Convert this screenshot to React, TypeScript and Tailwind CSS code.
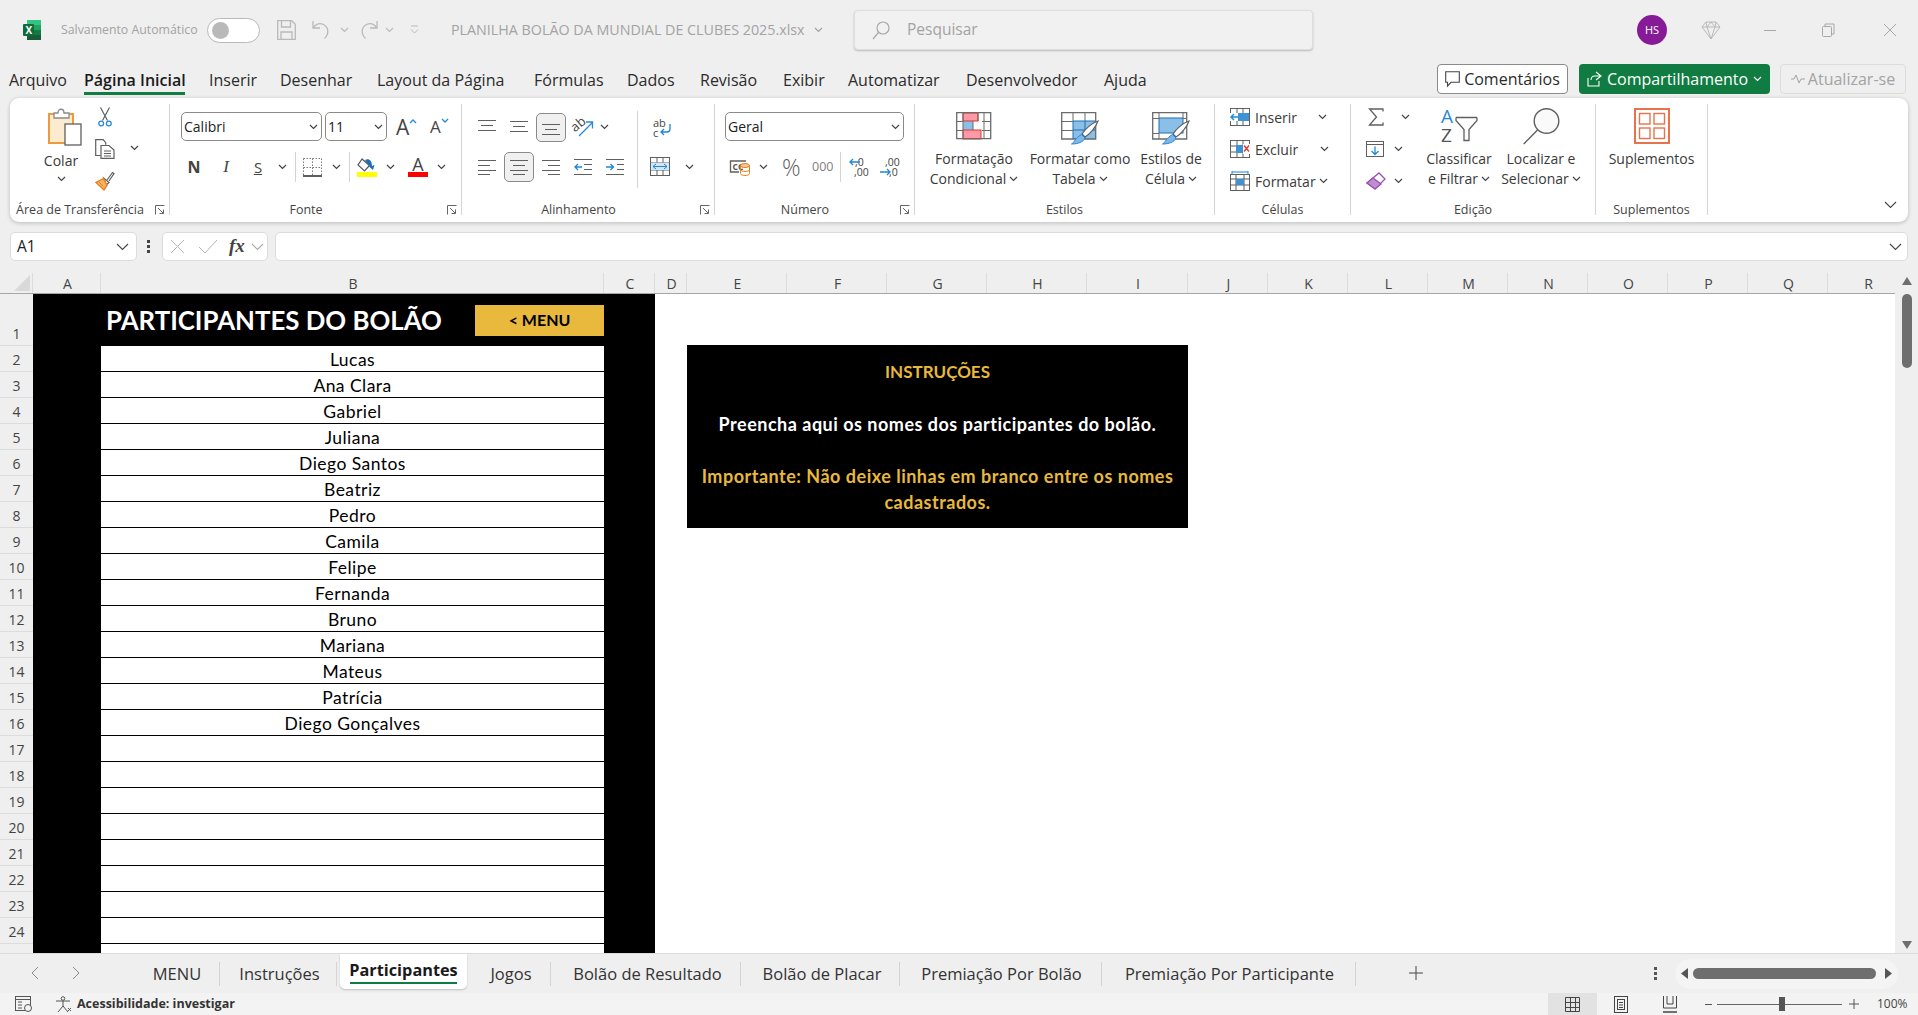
import React from "react";

const Ico = ({ w, h, children, className = "" }: { w: number; h: number; children?: React.ReactNode; className?: string }) => (
  <svg width={w} height={h} viewBox={`0 0 ${w} ${h}`} fill="none" className={`shrink-0 overflow-visible ${className}`}>
    {children}
  </svg>
);

const Chev = ({ color = "#444" }: { color?: string }) => (
  <Ico w={9} h={6}>
    <path d="M1 1l3.5 3.5L8 1" stroke={color} strokeWidth="1.2" />
  </Ico>
);

const WideChev = ({ color = "#444" }: { color?: string }) => (
  <Ico w={13} h={8}>
    <path d="M1 1l5.5 5.5L12 1" stroke={color} strokeWidth="1.1" />
  </Ico>
);

const Bars = ({ rows, w = 18, h = 14, color = "#5f5f5f" }: { rows: number[][]; w?: number; h?: number; color?: string }) => (
  <Ico w={w} h={h}>
    {rows.map((r, i) => (
      <path key={i} d={`M${r[0]} ${r[2]}.5H${r[1]}`} stroke={color} />
    ))}
  </Ico>
);

const Launcher = () => (
  <Ico w={10} h={10}>
    <path d="M.5 9.5V.5h9" stroke="#666" />
    <path d="M3 3l5.5 5.5M8.5 4.5v4h-4" stroke="#666" />
  </Ico>
);

const Sep = ({ className }: { className: string }) => <div className={`w-px shrink-0 bg-[#d4d4d4] ${className}`} />;

const Group = ({
  className,
  label,
  launcher,
  children,
}: {
  className: string;
  label: string;
  launcher?: boolean;
  children: React.ReactNode;
}) => (
  <div className={`flex h-[111px] shrink-0 flex-col border-r border-[#d4d4d4] ${className}`}>
    <div className="h-[101px]">{children}</div>
    <div className="flex h-[10px] items-center text-[12.5px] leading-[10px] text-[#444]">
      <div className="flex-1 whitespace-nowrap text-center">{label}</div>
      {launcher && (
        <div className="mr-[4px] ml-[5px] w-[10px]">
          <Launcher />
        </div>
      )}
    </div>
  </div>
);

const Select = ({ className, value }: { className: string; value: string }) => (
  <div className={`flex h-[29px] items-center justify-between rounded-[5px] border border-[#8a8a8a] pr-[3px] pl-[2px] text-[14px] text-[#222] ${className}`}>
    <span>{value}</span>
    <Chev />
  </div>
);

const Cell = ({ className = "w-[32px]", children }: { className?: string; children?: React.ReactNode }) => (
  <div className={`flex h-[30px] shrink-0 items-center justify-center ${className}`}>{children}</div>
);

const ChevCell = ({ className = "" }: { className?: string }) => (
  <div className={`flex w-[20px] shrink-0 justify-center ${className}`}>
    <Chev />
  </div>
);

const BigText = ({ top, bottom }: { top: string; bottom?: string }) => (
  <div className="text-center text-[14px] leading-[20px] whitespace-nowrap text-[#3a3a3a]">
    <div>{top}</div>
    {bottom && (
      <div className="flex items-center justify-center gap-[3px]">
        {bottom}
        <Chev />
      </div>
    )}
  </div>
);

/* ---- ribbon icons ---- */
const PasteIcon = () => (
  <Ico w={34} h={38}>
    <rect x="1" y="6" width="24" height="29" fill="#fdebd0" stroke="#ec9a3a" strokeWidth="2" />
    <path d="M6 10V5h4c0-5 6-5 6 0h5v5z" fill="#fff" stroke="#8a8a8a" strokeWidth="1.3" />
    <rect x="17" y="16" width="16" height="21" fill="#fff" stroke="#5f5f5f" strokeWidth="1.3" />
  </Ico>
);
const ScissorsIcon = () => (
  <Ico w={14} h={20}>
    <path d="M4.5 13.5L11.5.5M9.5 13.5L2.5.5" stroke="#5f5f5f" strokeWidth="1.2" />
    <circle cx="3.2" cy="16.5" r="2.4" stroke="#2b88d8" strokeWidth="1.3" />
    <circle cx="10.8" cy="16.5" r="2.4" stroke="#2b88d8" strokeWidth="1.3" />
  </Ico>
);
const CopyIcon = () => (
  <Ico w={20} h={20}>
    <path d="M5.5 16.5H.7V.7h7.5l2.5 3v2" stroke="#5f5f5f" strokeWidth="1.2" />
    <path d="M6 6.5h8l5 4.5v8.3H6z" fill="#fff" stroke="#5f5f5f" strokeWidth="1.2" />
    <path d="M9 12h7M9 14.5h7M9 17h7" stroke="#5f5f5f" />
  </Ico>
);
const BrushIcon = () => (
  <Ico w={20} h={20}>
    <path d="M12 9l5.5-7.5 1.5 1.2L14 10" stroke="#5f5f5f" strokeWidth="1.2" fill="#fff" />
    <path d="M8.5 7L14 11.5 10 15z" fill="#fff" stroke="#5f5f5f" strokeWidth="1.2" />
    <path d="M8.5 7.5L1 11.5 9 19l3-4.5z" fill="#f5b366" stroke="#e8801c" strokeWidth="1.4" />
    <path d="M4 11l4 4" stroke="#e8801c" />
  </Ico>
);
const GrowIcon = ({ down }: { down?: boolean }) => (
  <div className="flex items-start">
    <span className={`${down ? "text-[17px]" : "text-[21px]"} leading-[20px] text-[#444]`}>A</span>
    <Ico w={8} h={6} className="mt-[1px]">
      <path d={down ? "M1 1l3 3 3-3" : "M1 5l3-3 3 3"} stroke="#2b88d8" strokeWidth="1.3" />
    </Ico>
  </div>
);
const BorderIcon = () => (
  <Ico w={19} h={19}>
    <path d="M.5.5h18M.5 9.5h18M.5.5v18M9.5.5v18M18.5.5v18" stroke="#7a7a7a" strokeDasharray="1.5 1.5" />
    <path d="M0 18h19" stroke="#5f5f5f" strokeWidth="2" />
  </Ico>
);
const FillIcon = () => (
  <Ico w={20} h={20}>
    <path d="M5 2L1 8l6.5 6 5-5.5z" fill="#fff" stroke="#555" strokeWidth="1.2" />
    <path d="M8 3c4-2 7 1 7 6l2.5-1-1.5 5-3-2.5z" fill="#1f6fb2" />
    <rect y="15" width="20" height="5" fill="#ffff00" />
  </Ico>
);
const ColorA = () => (
  <div className="flex w-[20px] flex-col items-center">
    <span className="text-[18px] leading-[15px] text-[#444]">A</span>
    <div className="h-[5px] w-[20px] bg-[#ff0000]" />
  </div>
);
const OrientIcon = () => (
  <Ico w={22} h={20}>
    <text x="0" y="13" fontSize="13" fill="#444" transform="rotate(-40 5 10)" fontFamily="Open Sans, sans-serif">ab</text>
    <path d="M7 19L20 6M14 5h6.5v6.5" stroke="#2b88d8" strokeWidth="1.3" />
  </Ico>
);
const OutdentIcon = ({ flip }: { flip?: boolean }) => (
  <Ico w={18} h={16}>
    <path d="M0 .5h18M0 15.5h18" stroke="#5f5f5f" />
    <path d={flip ? "M11 5.5h7M11 10.5h7" : "M10 5.5h8M10 10.5h8"} stroke="#5f5f5f" />
    <path d={flip ? "M0 8h7M4.5 5l3 3-3 3" : "M1 8h7M4 5L1 8l3 3"} stroke="#1e88d4" strokeWidth="1.3" />
  </Ico>
);
const WrapIcon = () => (
  <Ico w={19} h={20}>
    <text x="0" y="9" fontSize="11" fill="#444" fontFamily="Open Sans, sans-serif">ab</text>
    <text x="0" y="19" fontSize="11" fill="#444" fontFamily="Open Sans, sans-serif">c</text>
    <path d="M17 6v5c0 2-1.5 3-3 3H8M11 11l-3 3 3 3" stroke="#1e88d4" strokeWidth="1.3" />
  </Ico>
);
const MergeIcon = () => (
  <Ico w={20} h={19}>
    <rect x=".5" y=".5" width="19" height="18" stroke="#5f5f5f" />
    <path d="M0 6h20M0 13h20M7 .5v5M13 .5v5M7 13v5M13 13v5" stroke="#5f5f5f" />
    <rect x="1" y="6" width="18" height="7" fill="#cfe6f7" />
    <path d="M3 9.5h14M6 7l-3 2.5L6 12M14 7l3 2.5L14 12" stroke="#1e88d4" />
  </Ico>
);
const MoneyIcon = () => (
  <Ico w={20} h={17}>
    <path d="M16 2H.5v11H9" stroke="#5f5f5f" strokeWidth="1.3" />
    <text x="2.5" y="10.5" fontSize="8.5" fontWeight="700" fill="#555" fontFamily="Open Sans, sans-serif">CC</text>
    <ellipse cx="15" cy="6.5" rx="4.5" ry="2" fill="#f8c99a" stroke="#e8801c" />
    <path d="M10.5 6.5v8c0 2.6 9 2.6 9 0v-8M10.5 10.5c0 2.6 9 2.6 9 0" stroke="#e8801c" fill="none" />
  </Ico>
);
const DecIcon = ({ more }: { more?: boolean }) => (
  <Ico w={20} h={20}>
    <text x={more ? "5" : "6"} y="8.5" fontSize="10.5" fill="#444" fontFamily="Open Sans, sans-serif">{more ? ",00" : ",0"}</text>
    <text x={more ? "9" : "5"} y="18.5" fontSize="10.5" fill="#444" fontFamily="Open Sans, sans-serif">{more ? ",0" : ",00"}</text>
    {more ? (
      <path d="M0 15h10M7 12l3 3-3 3" stroke="#1e88d4" strokeWidth="1.3" />
    ) : (
      <path d="M1 5h10M4 2L1 5l3 3" stroke="#1e88d4" strokeWidth="1.3" />
    )}
  </Ico>
);
const CondIcon = () => (
  <Ico w={36} h={28}>
    <rect x="7" y="9" width="10" height="9" fill="#8abfe8" />
    <rect x="7" y="1" width="15" height="8" fill="#fb9aa6" stroke="#e4352c" />
    <rect x="7" y="18" width="18" height="9" fill="#fb9aa6" stroke="#e4352c" />
    <path d="M.7.7h34v26H.7z" stroke="#6b6b6b" strokeWidth="1.3" />
    <path d="M1 9.5h6M26 9.5h9M1 18.5h6M26 18.5h9M7 1v26M28 1v26M17 9v9M22 1v8" stroke="#6b6b6b" />
  </Ico>
);
const Handle = () => (
  <g>
    <path d="M37 9c-2 6-8 13-13 16l-3-3c3-5 10-11 16-13z" fill="#fff" stroke="#5f5f5f" strokeWidth="1.2" />
    <path d="M20.5 22.5l3.5 3.5c-1.5 4-7 6-13.5 6 3-1.5 3.5-6 10-9.5z" fill="#7db8e8" stroke="#2b88d8" />
  </g>
);
const TableIcon = () => (
  <Ico w={38} h={33}>
    <rect x="12" y="9" width="23" height="18" fill="#8abfe8" />
    <path d="M12 9h23M12 18h23M12 9v18M24 9v18" stroke="#1f6fb2" />
    <path d="M.7 27V.7h34V27z" stroke="#6b6b6b" strokeWidth="1.3" />
    <path d="M1 9.5h11M1 18.5h11M12 1v8M24 1v8" stroke="#6b6b6b" />
    <Handle />
  </Ico>
);
const CellStyleIcon = () => (
  <Ico w={38} h={33}>
    <rect x="7" y="6" width="24" height="15" fill="#8abfe8" stroke="#1f6fb2" />
    <path d="M.7 27V.7h34V27z" stroke="#6b6b6b" strokeWidth="1.3" />
    <path d="M1 6.5h6M31 6.5h4M1 21.5h6M7 1v5M31 1v5M7 21v6" stroke="#6b6b6b" />
    <Handle />
  </Ico>
);
const SmallGrid = ({ children }: { children?: React.ReactNode }) => (
  <Ico w={20} h={18}>
    <rect x=".5" y=".5" width="19" height="17" stroke="#5f5f5f" />
    <path d="M0 6h20M0 12h20M7 0v18M13 0v18" stroke="#5f5f5f" />
    {children}
  </Ico>
);
const InsertIcon = () => (
  <SmallGrid>
    <rect x="8" y="5" width="11" height="8" fill="#3f92d6" />
    <rect x="0" y="5" width="8" height="8" fill="#fff" />
    <path d="M1 9h7M4 6L1 9l3 3" stroke="#1e88d4" strokeWidth="1.4" />
  </SmallGrid>
);
const DeleteIcon = () => (
  <SmallGrid>
    <rect x="6" y="5" width="8" height="8" fill="#3f92d6" />
    <rect x="13" y="4" width="7" height="10" fill="#fff" />
    <path d="M14 5.5l5 6M19 5.5l-5 6" stroke="#e4352c" strokeWidth="1.4" />
  </SmallGrid>
);
const FormatIcon = () => (
  <Ico w={20} h={20}>
    <path d="M2 1h16M2 0v3M18 0v3" stroke="#1e88d4" />
    <rect x=".5" y="3.5" width="19" height="16" stroke="#5f5f5f" />
    <path d="M0 8h20M0 14h20M6 3v17M14 3v17" stroke="#5f5f5f" />
    <rect x="6" y="8" width="8" height="6" fill="#3f92d6" />
  </Ico>
);
const SigmaIcon = () => (
  <Ico w={16} h={18}>
    <path d="M15 3.5V1H1.5L8.5 9l-7 8H15v-2.5" stroke="#5f5f5f" strokeWidth="1.3" />
  </Ico>
);
const FillDownIcon = () => (
  <Ico w={18} h={16}>
    <rect x=".5" y=".5" width="17" height="15" stroke="#5f5f5f" />
    <path d="M0 3.5h18" stroke="#5f5f5f" />
    <path d="M9 5.5v7.5M5.5 10L9 13.5 12.5 10" stroke="#1e88d4" strokeWidth="1.3" />
  </Ico>
);
const EraserIcon = () => (
  <Ico w={20} h={18}>
    <path d="M13 1l6 6-10 10-8-6z" fill="#fff" stroke="#9b4fb0" strokeWidth="1.3" />
    <path d="M7 6l8 6-6 5-8-6z" fill="#c08ed0" stroke="#9b4fb0" strokeWidth="1.3" />
  </Ico>
);
const SortIcon = () => (
  <Ico w={37} h={36}>
    <text x="0" y="15" fontSize="19" fill="#2b88d8" fontFamily="Open Sans, sans-serif">A</text>
    <text x="0" y="34" fontSize="19" fill="#555" fontFamily="Open Sans, sans-serif">Z</text>
    <path d="M15 9.5h21M15 9.5v3l8 9v11h5v-11l8-9v-3" stroke="#5f5f5f" strokeWidth="1.3" fill="#fff" />
  </Ico>
);
const FindIcon = () => (
  <Ico w={37} h={37}>
    <circle cx="23.5" cy="13" r="12.3" stroke="#5f5f5f" strokeWidth="1.4" fill="#fafafa" />
    <path d="M14.5 22L.7 36" stroke="#5f5f5f" strokeWidth="1.4" />
  </Ico>
);
const AddinIcon = () => (
  <Ico w={36} h={36}>
    <rect x="1" y="1" width="34" height="34" stroke="#e8734a" strokeWidth="2" />
    <rect x="5.5" y="5.5" width="10.5" height="10.5" stroke="#e8734a" strokeWidth="1.4" />
    <rect x="20" y="5.5" width="10.5" height="10.5" stroke="#e8734a" strokeWidth="1.4" />
    <rect x="5.5" y="20" width="10.5" height="10.5" stroke="#e8734a" strokeWidth="1.4" />
    <rect x="20" y="20" width="10.5" height="10.5" stroke="#e8734a" strokeWidth="1.4" />
  </Ico>
);

const ribbonTabs = [
  { label: "Arquivo", cls: "ml-[9px] w-[75px]" },
  { label: "Inserir", cls: "w-[71px]" },
  { label: "Desenhar", cls: "w-[97px]" },
  { label: "Layout da Página", cls: "w-[157px]" },
  { label: "Fórmulas", cls: "w-[93px]" },
  { label: "Dados", cls: "w-[73px]" },
  { label: "Revisão", cls: "w-[83px]" },
  { label: "Exibir", cls: "w-[65px]" },
  { label: "Automatizar", cls: "w-[118px]" },
  { label: "Desenvolvedor", cls: "w-[138px]" },
  { label: "Ajuda", cls: "w-[60px]" },
];

const TitleBar = () => (
  <div className="flex h-[60px] items-center text-[#a3a3a3]">
    <Ico w={18} h={20} className="ml-[23px]">
      <rect x="4" width="14" height="5" fill="#33c481" />
      <rect x="4" y="5" width="14" height="5" fill="#21a366" />
      <rect x="4" y="10" width="14" height="5" fill="#107c41" />
      <rect x="4" y="15" width="14" height="5" fill="#185c37" />
      <rect y="4" width="11" height="12" rx="1" fill="#0f6b3a" />
      <text x="2.6" y="13.5" fontSize="10" fontWeight="700" fill="#fff" fontFamily="Open Sans, sans-serif">X</text>
    </Ico>
    <span className="ml-[20px] w-[146px] text-[12.3px] whitespace-nowrap">Salvamento Automático</span>
    <div className="flex h-[25px] w-[53px] items-center rounded-full border border-[#b9b9b9] bg-white pl-[4px]">
      <div className="h-[17px] w-[17px] rounded-full bg-[#b9b9b9]" />
    </div>
    <Ico w={19} h={20} className="ml-[17px]">
      <path d="M.7.7h14l3.6 3.6v15H.7z" stroke="#b9b9b9" strokeWidth="1.3" />
      <path d="M4.5 1v6h9V1M4 19v-7h11v7" stroke="#b9b9b9" strokeWidth="1.3" />
    </Ico>
    <Ico w={20} h={20} className="ml-[16px]">
      <path d="M1 1v7h7" stroke="#b9b9b9" strokeWidth="1.3" />
      <path d="M1.5 7.5C4 4 8 3 11.5 4.5c5 2.5 6 9 1 14" stroke="#b9b9b9" strokeWidth="1.3" />
    </Ico>
    <div className="ml-[8px]"><Chev color="#b9b9b9" /></div>
    <Ico w={20} h={20} className="ml-[9px]">
      <path d="M19 1v7h-7" stroke="#b9b9b9" strokeWidth="1.3" />
      <path d="M18.5 7.5C16 4 12 3 8.5 4.5c-5 2.5-6 9-1 14" stroke="#b9b9b9" strokeWidth="1.3" />
    </Ico>
    <div className="ml-[7px]"><Chev color="#b9b9b9" /></div>
    <Ico w={9} h={10} className="ml-[16px]">
      <path d="M1 1h7M1 4.5l3.5 3.5L8 4.5" stroke="#b9b9b9" />
    </Ico>
    <span className="ml-[32px] w-[360px] text-[14.3px] whitespace-nowrap">PLANILHA BOLÃO DA MUNDIAL DE CLUBES 2025.xlsx</span>
    <div className="ml-[3px]"><Chev color="#a3a3a3" /></div>
    <div className="ml-[31px] flex h-[40px] w-[459px] items-center rounded-[4px] border border-[#dedede] bg-[#f1f1f1] shadow-[0_1px_2px_rgba(0,0,0,0.22)]">
      <Ico w={18} h={19} className="ml-[17px]">
        <circle cx="11" cy="7" r="6" stroke="#a8a8a8" strokeWidth="1.2" />
        <path d="M6.5 11.5L1 18" stroke="#a8a8a8" strokeWidth="1.2" />
      </Ico>
      <span className="ml-[17px] text-[15.5px]">Pesquisar</span>
    </div>
    <div className="ml-[324px] flex h-[30px] w-[30px] items-center justify-center rounded-full bg-[#871a97] text-[11px] text-white">HS</div>
    <Ico w={20} h={20} className="ml-[34px]">
      <path d="M5 2h10l4 5-9 12L1 7zM1 7h18M6 7l4 12 4-12M5 2l1 5 4-5 4 5 1-5" stroke="#b9b9b9" />
    </Ico>
    <div className="ml-[43px] h-px w-[12px] bg-[#a8a8a8]" />
    <Ico w={13} h={14} className="ml-[46px]">
      <path d="M3 3V1h9v10h-2" stroke="#a8a8a8" />
      <rect x=".5" y="3.5" width="9" height="10" rx="1" stroke="#a8a8a8" />
    </Ico>
    <Ico w={14} h={14} className="ml-[48px]">
      <path d="M1 1l12 12M13 1L1 13" stroke="#a8a8a8" />
    </Ico>
  </div>
);

const RibbonTab = ({ label, cls }: { label: string; cls: string }) => (
  <div className={`h-[35px] shrink-0 pt-[8px] leading-[24px] whitespace-nowrap ${cls}`}>{label}</div>
);

const TabRow = () => (
  <div className="flex h-[38px] items-start text-[16px] text-[#2b2b2b]">
    <RibbonTab {...ribbonTabs[0]} />
    <div className="mr-[24px] h-[35px] w-[101px] shrink-0 border-b-[3px] border-[#107c41] pt-[8px] leading-[24px] font-semibold whitespace-nowrap text-[#1a1a1a]">
      Página Inicial
    </div>
    {ribbonTabs.slice(1).map((t) => (
      <RibbonTab key={t.label} {...t} />
    ))}
    <div className="mt-[4px] ml-[273px] flex h-[30px] w-[131px] shrink-0 items-center justify-center gap-[4px] rounded-[4px] border border-[#8a8a8a] bg-white">
      <Ico w={15} h={16}>
        <path d="M.7.7h13.6v10.6H6L2.5 15v-3.7H.7z" stroke="#444" strokeWidth="1.1" />
      </Ico>
      Comentários
    </div>
    <div className="mt-[4px] ml-[11px] flex h-[30px] w-[191px] shrink-0 items-center justify-center gap-[5px] rounded-[4px] bg-[#107c41] text-white">
      <Ico w={15} h={16}>
        <path d="M9 1l5 4-5 4M13.5 5H8C5 5 4 7 4 9M1 7v8h11v-5" stroke="#fff" strokeWidth="1.1" />
      </Ico>
      Compartilhamento
      <Chev color="#fff" />
    </div>
    <div className="mt-[4px] ml-[10px] flex h-[30px] w-[126px] shrink-0 items-center justify-center gap-[3px] rounded-[4px] border border-[#dcdcdc] text-[#a3a3a3]">
      <Ico w={14} h={10}>
        <path d="M0 5h3l2-4 3 8 2-4h4" stroke="#a3a3a3" />
      </Ico>
      Atualizar-se
    </div>
  </div>
);

const Ribbon = () => (
  <div className="mx-[10px] flex h-[124px] rounded-[9px] bg-white pt-[6px] shadow-[0_1px_4px_rgba(0,0,0,0.22)]">
    {/* Clipboard */}
    <Group className="w-[160px]" label="Área de Transferência" launcher>
      <div className="flex h-full">
        <div className="ml-[23px] flex w-[56px] flex-col items-center pt-[4px]">
          <div className="ml-[8px]"><PasteIcon /></div>
          <div className="mt-[5px] text-[14px] leading-[20px] text-[#3a3a3a]">Colar</div>
          <div className="mt-[5px]"><Chev /></div>
        </div>
        <div className="ml-[6px] grid w-[20px] grid-rows-[26px_38px_26px] items-center justify-items-center">
          <ScissorsIcon />
          <CopyIcon />
          <BrushIcon />
        </div>
        <ChevCell className="mt-[41px] ml-[9px]" />
      </div>
    </Group>

    {/* Font */}
    <Group className="w-[292px]" label="Fonte" launcher>
      <div className="pt-[8px]">
        <div className="ml-[11px] flex items-center">
          <Select className="w-[141px]" value="Calibri" />
          <Select className="ml-[3px] w-[62px]" value="11" />
          <div className="ml-[9px] w-[34px]"><GrowIcon /></div>
          <div className="w-[20px]"><GrowIcon down /></div>
        </div>
        <div className="mt-[11px] ml-[10px] flex items-center text-[#444]">
          <Cell className="w-[28px]"><span className="text-[16px] font-bold">N</span></Cell>
          <Cell className="ml-[4px] w-[28px]"><span className="font-['Liberation_Serif',serif] text-[17px] italic">I</span></Cell>
          <Cell className="ml-[4px] w-[28px]"><span className="text-[15px] underline">S</span></Cell>
          <ChevCell />
          <Sep className="ml-[3px] h-[30px]" />
          <div className="ml-[7px]"><BorderIcon /></div>
          <ChevCell className="ml-[4px]" />
          <Sep className="ml-[3px] h-[30px]" />
          <div className="ml-[7px]"><FillIcon /></div>
          <ChevCell className="ml-[3px]" />
          <div className="ml-[8px]"><ColorA /></div>
          <ChevCell className="ml-[3px]" />
        </div>
      </div>
    </Group>

    {/* Alignment */}
    <Group className="w-[253px]" label="Alinhamento" launcher>
      <div className="flex h-full">
        <div className="ml-[9px] w-[166px] pt-[8px]">
          <div className="flex items-center">
            <Cell><Bars rows={[[0, 18, 1], [3, 15, 6], [0, 18, 11]]} h={16} /></Cell>
            <Cell><Bars rows={[[0, 18, 1], [3, 15, 6], [0, 18, 11]]} h={14} /></Cell>
            <Cell className="w-[32px]">
              <div className="flex h-[29px] w-[30px] items-end justify-center rounded-[5px] border border-[#8a8a8a] bg-[#f0f0f0] pb-[4px]">
                <Bars rows={[[0, 18, 1], [3, 15, 6], [0, 18, 11]]} />
              </div>
            </Cell>
            <Cell><OrientIcon /></Cell>
            <div className="flex w-[10px] justify-center"><Chev /></div>
          </div>
          <div className="mt-[10px] flex items-center">
            <Cell><Bars rows={[[0, 18, 1], [0, 12, 6], [0, 18, 11], [0, 12, 15]]} h={16} /></Cell>
            <Cell>
              <div className="flex h-[30px] w-[30px] items-center justify-center rounded-[5px] border border-[#8a8a8a] bg-[#f0f0f0]">
                <Bars rows={[[0, 18, 1], [3, 15, 6], [0, 18, 11], [3, 15, 15]]} h={16} />
              </div>
            </Cell>
            <Cell><Bars rows={[[0, 18, 1], [6, 18, 6], [0, 18, 11], [6, 18, 15]]} h={16} /></Cell>
            <Cell><OutdentIcon /></Cell>
            <Cell><OutdentIcon flip /></Cell>
          </div>
        </div>
        <Sep className="mt-[7px] h-[77px]" />
        <div className="flex flex-col">
          <div className="mt-[14px] ml-[15px]"><WrapIcon /></div>
          <div className="mt-[19px] ml-[12px] flex items-center">
            <MergeIcon />
            <ChevCell className="ml-[9px]" />
          </div>
        </div>
      </div>
    </Group>

    {/* Number */}
    <Group className="w-[200px]" label="Número" launcher>
      <div className="pt-[8px]">
        <Select className="ml-[10px] w-[179px]" value="Geral" />
        <div className="mt-[11px] flex h-[30px] items-center text-[#5f5f5f]">
          <div className="ml-[15px]"><MoneyIcon /></div>
          <ChevCell className="ml-[3px]" />
          <span className="ml-[9px] w-[19px] text-[23px] leading-[30px] font-light">%</span>
          <span className="ml-[11px] w-[21px] text-[12.5px] text-[#808080]">000</span>
          <Sep className="ml-[7px] h-[30px]" />
          <div className="ml-[8px]"><DecIcon /></div>
          <div className="ml-[11px]"><DecIcon more /></div>
        </div>
      </div>
    </Group>

    {/* Styles */}
    <Group className="w-[300px]" label="Estilos">
      <div className="flex pt-[8px]">
        <div className="ml-[14px] flex w-[90px] flex-col items-center">
          <div className="h-[28px]"><CondIcon /></div>
          <div className="mt-[9px]"><BigText top="Formatação" bottom="Condicional" /></div>
        </div>
        <div className="flex w-[122px] flex-col items-center">
          <div className="h-[28px]"><TableIcon /></div>
          <div className="mt-[9px]"><BigText top="Formatar como" bottom="Tabela" /></div>
        </div>
        <div className="flex w-[60px] flex-col items-center">
          <div className="h-[28px]"><CellStyleIcon /></div>
          <div className="mt-[9px]"><BigText top="Estilos de" bottom="Célula" /></div>
        </div>
      </div>
    </Group>

    {/* Cells */}
    <Group className="w-[136px]" label="Células">
      <div className="grid grid-rows-[26px_38px_26px] items-center pl-[15px] text-[14px] text-[#3a3a3a]">
        <div className="flex items-center">
          <InsertIcon />
          <span className="ml-[5px] w-[63px]">Inserir</span>
          <Chev />
        </div>
        <div className="flex items-center">
          <DeleteIcon />
          <span className="ml-[5px] w-[65px]">Excluir</span>
          <Chev />
        </div>
        <div className="flex items-center">
          <FormatIcon />
          <span className="ml-[5px] w-[64px]">Formatar</span>
          <Chev />
        </div>
      </div>
    </Group>

    {/* Editing */}
    <Group className="w-[245px]" label="Edição">
      <div className="flex">
        <div className="ml-[15px] grid w-[48px] grid-rows-[26px_38px_26px] items-center">
          <div className="flex items-center pl-[2px]">
            <SigmaIcon />
            <div className="ml-[17px]"><Chev /></div>
          </div>
          <div className="flex items-center">
            <FillDownIcon />
            <div className="ml-[10px]"><Chev /></div>
          </div>
          <div className="flex items-center">
            <EraserIcon />
            <div className="ml-[8px]"><Chev /></div>
          </div>
        </div>
        <div className="flex w-[90px] flex-col items-center pt-[4px]">
          <div className="h-[37px]"><SortIcon /></div>
          <div className="mt-[4px]"><BigText top="Classificar" bottom="e Filtrar" /></div>
        </div>
        <div className="flex w-[74px] flex-col items-center pt-[4px]">
          <div className="h-[37px]"><FindIcon /></div>
          <div className="mt-[4px]"><BigText top="Localizar e" bottom="Selecionar" /></div>
        </div>
      </div>
    </Group>

    {/* Add-ins */}
    <Group className="w-[112px]" label="Suplementos">
      <div className="flex flex-col items-center pt-[4px]">
        <div className="h-[37px]"><AddinIcon /></div>
        <div className="mt-[4px]"><BigText top="Suplementos" /></div>
      </div>
    </Group>

    <div className="flex flex-1 items-end justify-end pr-[11px] pb-[13px]">
      <WideChev />
    </div>
  </div>
);

const FormulaBar = () => (
  <div className="mx-[10px] mt-[10px] flex h-[29px] items-center">
    <div className="flex h-[29px] w-[127px] items-center justify-between rounded-[5px] border border-[#dcdcdc] bg-white pr-[7px] pl-[6px] text-[15.5px] text-[#222]">
      A1
      <WideChev />
    </div>
    <div className="ml-[10px] flex w-[4px] flex-col gap-[2px]">
      <div className="h-[3px] w-[3px] bg-[#444]" />
      <div className="h-[3px] w-[3px] bg-[#444]" />
      <div className="h-[3px] w-[3px] bg-[#444]" />
    </div>
    <div className="ml-[11px] flex h-[29px] w-[106px] items-center rounded-[5px] border border-[#dcdcdc] bg-white pl-[7px]">
      <Ico w={15} h={15}>
        <path d="M1 1l13 13M14 1L1 14" stroke="#b5b5b5" />
      </Ico>
      <Ico w={20} h={15} className="ml-[13px]">
        <path d="M1 8l6 6L19 1" stroke="#b5b5b5" />
      </Ico>
      <span className="ml-[11px] font-['Liberation_Serif',serif] text-[19px] font-bold text-[#444] italic">fx</span>
      <div className="ml-[6px]">
        <WideChev color="#aaa" />
      </div>
    </div>
    <div className="ml-[7px] flex h-[29px] flex-1 items-center justify-end rounded-[5px] border border-[#dcdcdc] bg-white pr-[5px]">
      <WideChev />
    </div>
  </div>
);

const columns = [
  { l: "A", cls: "w-[68px]" },
  { l: "B", cls: "w-[503px]" },
  { l: "C", cls: "w-[51px]" },
  { l: "D", cls: "w-[32px]" },
  { l: "E", cls: "w-[100px]" },
  { l: "F", cls: "w-[100px]" },
  { l: "G", cls: "w-[100px]" },
  { l: "H", cls: "w-[100px]" },
  { l: "I", cls: "w-[101px]" },
  { l: "J", cls: "w-[80px]" },
  { l: "K", cls: "w-[80px]" },
  { l: "L", cls: "w-[80px]" },
  { l: "M", cls: "w-[80px]" },
  { l: "N", cls: "w-[80px]" },
  { l: "O", cls: "w-[80px]" },
  { l: "P", cls: "w-[80px]" },
  { l: "Q", cls: "w-[80px]" },
  { l: "R", cls: "w-[80px]" },
];

const names = [
  "Lucas", "Ana Clara", "Gabriel", "Juliana", "Diego Santos", "Beatriz", "Pedro", "Camila",
  "Felipe", "Fernanda", "Bruno", "Mariana", "Mateus", "Patrícia", "Diego Gonçalves",
  "", "", "", "", "", "", "", "", "",
];

const Sheet = () => (
  <div className="mt-[12px] flex h-[680px] overflow-hidden">
    <div className="flex min-w-0 flex-1 flex-col">
      {/* column headers */}
      <div className="flex h-[21px] shrink-0 overflow-hidden border-b border-[#a6a6a6] text-[14px] text-[#444]">
        <div className="flex w-[33px] shrink-0 items-end justify-end border-r border-[#dcdcdc] pr-[2px] pb-[2px]">
          <Ico w={16} h={16}>
            <path d="M16 0v16H0z" fill="#d9d9d9" />
          </Ico>
        </div>
        {columns.map((c) => (
          <div key={c.l} className={`flex shrink-0 items-center justify-center border-r border-[#dcdcdc] pl-[2px] ${c.cls}`}>
            {c.l}
          </div>
        ))}
      </div>
      <div className="flex min-h-0 flex-1 overflow-hidden">
        {/* row headers */}
        <div className="w-[33px] shrink-0 text-[14px] text-[#444]">
          <div className="flex h-[52px] items-end justify-center border-b border-[#dcdcdc] pb-[1px]">1</div>
          {names.slice(0, 23).map((_, i) => (
            <div key={i} className="flex h-[26px] items-center justify-center border-b border-[#dcdcdc] pt-[2px]">
              {i + 2}
            </div>
          ))}
        </div>
        {/* black panel with the list */}
        <div className="w-[622px] shrink-0 bg-black pr-[51px] pl-[68px] font-['Lato',sans-serif]">
          <div className="flex h-[52px] items-center justify-between pl-[5px]">
            <span className="text-[25.8px] font-bold whitespace-nowrap text-white">PARTICIPANTES DO BOLÃO</span>
            <div className="flex h-[31px] w-[129px] items-center justify-center bg-[#e8b93c] text-[16px] font-bold text-black">&lt; MENU</div>
          </div>
          {names.map((n, i) => (
            <div key={i} className="flex h-[26px] items-center justify-center border-b border-black bg-white pt-[3px] text-[17.5px] tracking-[0.45px] text-black">
              {n}
            </div>
          ))}
        </div>
        {/* instructions */}
        <div className="min-w-0 flex-1 bg-white">
          <div className="mt-[51px] ml-[32px] h-[183px] w-[501px] bg-black pt-[14px] text-center font-['Lato',sans-serif] text-[18px] leading-[26px] font-bold tracking-[0.5px] whitespace-nowrap">
            <div className="mb-[26px] text-[17px] tracking-normal text-[#e8b93c]">INSTRUÇÕES</div>
            <div className="mb-[26px] text-white">Preencha aqui os nomes dos participantes do bolão.</div>
            <div className="text-[#e8b93c]">
              Importante: Não deixe linhas em branco entre os nomes
              <br />
              cadastrados.
            </div>
          </div>
        </div>
      </div>
    </div>
    {/* vertical scrollbar */}
    <div className="flex w-[23px] shrink-0 flex-col items-center pl-[1px]">
      <Ico w={10} h={8} className="mt-[4px]">
        <path d="M5 0l5 8H0z" fill="#6e6e6e" />
      </Ico>
      <div className="mt-[9px] h-[74px] w-[10px] rounded-full bg-[#6e6e6e]" />
      <div className="flex-1" />
      <Ico w={10} h={8} className="mb-[4px]">
        <path d="M5 8l5-8H0z" fill="#6e6e6e" />
      </Ico>
    </div>
  </div>
);

const sheetTabs = [
  { label: "MENU", cls: "w-[85px]" },
  { label: "Instruções", cls: "w-[117px] pl-[3px]" },
];
const sheetTabs2 = [
  { label: "Jogos", cls: "ml-[5px] w-[79px]" },
  { label: "Bolão de Resultado", cls: "w-[190px] pl-[4px]" },
  { label: "Bolão de Placar", cls: "w-[159px] pl-[4px]" },
  { label: "Premiação Por Bolão", cls: "w-[202px] pl-[2px]" },
  { label: "Premiação Por Participante", cls: "w-[254px] pl-[2px]" },
];

const SheetTab = ({ label, cls }: { label: string; cls: string }) => (
  <div className={`mt-[8px] flex h-[24px] shrink-0 items-center justify-center border-r border-[#d4d4d4] whitespace-nowrap ${cls}`}>{label}</div>
);

const SheetTabs = () => (
  <div className="flex h-[40px] border-t border-[#dcdcdc] text-[16.5px] text-[#333]">
    <div className="flex w-[135px] shrink-0 items-center self-stretch pb-[2px] pl-[31px]">
      <Ico w={8} h={14}>
        <path d="M7 1L1 7l6 6" stroke="#8a8a8a" />
      </Ico>
      <Ico w={8} h={14} className="ml-[33px]">
        <path d="M1 1l6 6-6 6" stroke="#8a8a8a" />
      </Ico>
    </div>
    {sheetTabs.map((t) => (
      <SheetTab key={t.label} {...t} />
    ))}
    <div className="ml-[3px] flex h-[35px] w-[127px] shrink-0 flex-col items-center rounded-b-[5px] bg-white pt-[5px] text-[16.3px] font-bold text-[#1a1a1a] shadow-[0_1px_2px_rgba(0,0,0,0.2)]">
      <span className="leading-[23px]">Participantes</span>
      <div className="h-[2px] w-[107px] bg-[#107c41]" />
    </div>
    {sheetTabs2.map((t) => (
      <SheetTab key={t.label} {...t} />
    ))}
    <div className="ml-[53px] flex items-center pb-[2px]">
      <Ico w={14} h={14}>
        <path d="M7 0v14M0 7h14" stroke="#444" />
      </Ico>
    </div>
    <div className="ml-[231px] flex flex-col gap-[2px] self-center">
      <div className="h-[3px] w-[3px] bg-[#555]" />
      <div className="h-[3px] w-[3px] bg-[#555]" />
      <div className="h-[3px] w-[3px] bg-[#555]" />
    </div>
    <div className="ml-[18px] flex h-[30px] w-[223px] items-center self-center rounded-full bg-[#f4f4f4] px-[6px]">
      <Ico w={7} h={11}>
        <path d="M0 5.5L7 0v11z" fill="#555" />
      </Ico>
      <div className="ml-[5px] h-[11px] flex-1 rounded-full bg-[#6e6e6e]" />
      <Ico w={7} h={11} className="ml-[9px]">
        <path d="M7 5.5L0 0v11z" fill="#555" />
      </Ico>
    </div>
  </div>
);

const StatusBar = () => (
  <div className="flex h-[22px] items-center bg-[#f3f3f3] text-[#333]">
    <Ico w={18} h={17} className="ml-[15px]">
      <rect x=".5" y=".5" width="15" height="14" stroke="#555" />
      <path d="M0 3.5h16M3 6h4M3 9h4M3 12h4" stroke="#555" />
      <circle cx="13" cy="12" r="3.5" fill="#f3f3f3" stroke="#555" />
    </Ico>
    <Ico w={16} h={17} className="ml-[22px]">
      <circle cx="8" cy="2.5" r="1.8" stroke="#555" />
      <path d="M1 5h14M8 5v5M8 10l-5 6M8 10l5 6M13 12l3 3M16 12l-3 3" stroke="#555" />
    </Ico>
    <span className="ml-[6px] w-[157px] text-[12.5px] font-bold whitespace-nowrap">Acessibilidade: investigar</span>
    <div className="ml-[1314px] flex h-full w-[49px] items-center justify-center bg-[#e2e2e2]">
      <Ico w={15} h={15}>
        <path d="M.5.5h14v14H.5zM0 5.5h15M0 10.5h15M5.5 0v15M10.5 0v15" stroke="#444" />
      </Ico>
    </div>
    <Ico w={14} h={17} className="ml-[17px]">
      <rect x=".5" y=".5" width="13" height="16" stroke="#444" />
      <rect x="3.5" y="3.5" width="7" height="10" stroke="#444" />
      <path d="M5 6.5h4M5 9h4M5 11.5h4" stroke="#444" />
    </Ico>
    <Ico w={14} h={17} className="ml-[35px]">
      <path d="M.5 0v12h13V0M4 0v8h6V0" stroke="#444" />
      <path d="M0 16h14" stroke="#444" strokeWidth="1.5" />
    </Ico>
    <div className="ml-[28px] h-px w-[7px] bg-[#555]" />
    <div className="ml-[5px] flex w-[125px] items-center">
      <div className="h-px w-[62px] bg-[#666]" />
      <div className="h-[14px] w-[6px] bg-[#555]" />
      <div className="h-px flex-1 bg-[#666]" />
    </div>
    <Ico w={10} h={10} className="ml-[7px]">
      <path d="M5 0v10M0 5h10" stroke="#555" />
    </Ico>
    <span className="ml-[18px] text-[12px] whitespace-nowrap text-[#444]">100%</span>
  </div>
);

export default function App() {
  return (
    <div className="h-[1015px] w-[1918px] overflow-hidden bg-[#efefef] font-['Open_Sans',sans-serif]">
      <TitleBar />
      <TabRow />
      <Ribbon />
      <FormulaBar />
      <Sheet />
      <SheetTabs />
      <StatusBar />
    </div>
  );
}
